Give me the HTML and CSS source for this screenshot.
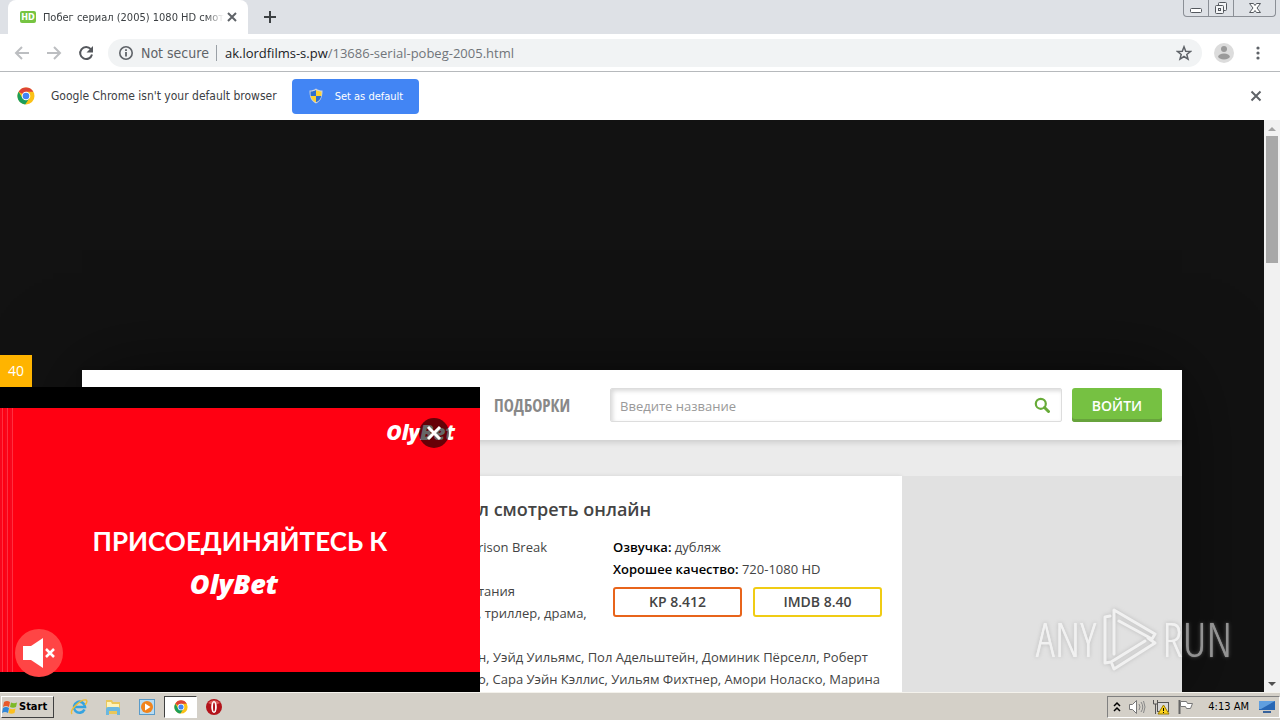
FILE: index.html
```html
<!DOCTYPE html>
<html lang="ru">
<head>
    <meta charset="UTF-8">
    <meta name="viewport" content="width=device-width, initial-scale=1">
    <title>Побег сериал (2005) 1080 HD смотреть онлайн</title>
    <link rel="stylesheet" href="styles.css">
</head>
<body>

    <!-- Tab strip -->
    <div class="tabstrip">
        <div class="tab">
            <span class="favicon">HD</span>
            <span class="tab-title">Побег сериал (2005) 1080 HD смот</span>
            <button class="icon-btn" aria-label="Close tab">
                <svg width="16" height="16" viewBox="0 0 16 16"><path d="M4 4l8 8M12 4l-8 8" stroke="#5f6368" stroke-width="2"/></svg>
            </button>
        </div>
        <button class="icon-btn new-tab" aria-label="New tab">
            <svg width="16" height="16" viewBox="0 0 16 16"><path d="M8 2v12M2 8h12" stroke="#3c4043" stroke-width="2"/></svg>
        </button>
        <div class="window-buttons">
            <button aria-label="Minimize">
                <svg width="24" height="16" viewBox="0 0 24 16"><rect x="6.500" y="8.500" width="11" height="4" rx="1" fill="#fff" stroke="#54585e"/></svg>
            </button>
            <button aria-label="Restore">
                <svg width="24" height="16" viewBox="0 0 24 16"><g fill="#f4f5f7" stroke="#54585e"><rect x="9.500" y="2.500" width="8" height="8" rx="1"/><rect x="6.500" y="5.500" width="8" height="8" rx="1"/><rect x="9.500" y="8.500" width="2" height="2"/></g></svg>
            </button>
            <button class="wide" aria-label="Close">
                <svg width="24" height="16" viewBox="0 0 24 16"><path d="M6.500 3.500h4l1.500 2 1.500-2h4L14 8l3.500 4.500h-4l-1.500-2-1.500 2h-4L10 8z" fill="#fff" stroke="#54585e"/></svg>
            </button>
        </div>
    </div>

    <!-- Toolbar -->
    <div class="toolbar">
        <button class="icon-btn" aria-label="Back">
            <svg width="16" height="16" viewBox="0 0 16 16"><path d="M15 8H2.500M8 2L2 8l6 6" fill="none" stroke="#bcbec1" stroke-width="2"/></svg>
        </button>
        <button class="icon-btn" aria-label="Forward">
            <svg width="16" height="16" viewBox="0 0 16 16"><path d="M1 8h12.500M8 2l6 6-6 6" fill="none" stroke="#bcbec1" stroke-width="2"/></svg>
        </button>
        <button class="icon-btn" aria-label="Reload">
            <svg width="16" height="16" viewBox="0 0 16 16"><path d="M12.800 4.200A6 6 0 1 0 14 9.500" fill="none" stroke="#55585d" stroke-width="2"/><path d="M15 1v6.500H8.500z" fill="#55585d"/></svg>
        </button>
        <div class="omnibox">
            <svg width="16" height="16" viewBox="0 0 16 16"><circle cx="8" cy="8" r="6.200" fill="none" stroke="#5f6368" stroke-width="1.600"/><path d="M8 7v4.500M8 4.300v1.600" stroke="#5f6368" stroke-width="1.800"/></svg>
            <span class="secure">Not secure</span>
            <span class="url"><b>ak.lordfilms-s.pw</b>/13686-serial-pobeg-2005.html</span>
            <button class="icon-btn" aria-label="Bookmark">
                <svg width="16" height="16" viewBox="0 0 16 16"><path d="M8 1.800l1.700 4.400 4.700.3-3.600 3 1.200 4.600L8 11.500l-4 2.600 1.200-4.600-3.600-3 4.700-.3z" fill="none" stroke="#5f6368" stroke-width="1.500"/></svg>
            </button>
        </div>
        <button class="icon-btn" aria-label="Profile">
            <svg width="20" height="20" viewBox="0 0 20 20"><circle cx="10" cy="10" r="10" fill="#dcdcdc"/><circle cx="10" cy="6" r="3" fill="#9a9a9a"/><ellipse cx="10" cy="13.500" rx="5.800" ry="3" fill="#9a9a9a"/></svg>
        </button>
        <button class="icon-btn" aria-label="Menu">
            <svg width="16" height="16" viewBox="0 0 16 16" fill="#5f6368"><circle cx="8" cy="3" r="1.600"/><circle cx="8" cy="8" r="1.600"/><circle cx="8" cy="13" r="1.600"/></svg>
        </button>
    </div>

    <!-- Default browser bar -->
    <div class="infobar">
        <svg width="18" height="18" viewBox="0 0 18 18"><circle cx="9" cy="9" r="8.500" fill="#fbc116"/><path d="M9 9L1.600 4.700A8.500 8.500 0 0 1 16.400 4.700H9z" fill="#dd4437"/><path d="M1.600 4.700A8.500 8.500 0 0 0 8.200 17.500L12.500 11 9 9 5.500 11z" fill="#1b9e5a"/><circle cx="9" cy="9" r="4.300" fill="#fff"/><circle cx="9" cy="9" r="3.300" fill="#4285f4"/></svg>
        <span class="infobar-text">Google Chrome isn't your default browser</span>
        <button class="default-btn">
            <svg width="16" height="16" viewBox="0 0 16 16"><path d="M8 .5C6 2 4 2.500 1.500 2.500 1.500 9 3 13 8 15.500 13 13 14.500 9 14.500 2.500 12 2.500 10 2 8 .5z" fill="#cfd4dc"/><path d="M8 2v6H2.700C2.500 6.500 2.500 5 2.600 3.600 5 3.400 6.500 3 8 2z" fill="#2f6fd0"/><path d="M8 2v6h5.300c.2-1.500.2-3 .1-4.400C11 3.400 9.500 3 8 2z" fill="#fdd232"/><path d="M8 14.200V8H2.700c.6 3 2.300 5 5.300 6.200z" fill="#fdd232"/><path d="M8 14.200V8h5.300c-.6 3-2.300 5-5.300 6.200z" fill="#2f6fd0"/></svg>
            Set as default
        </button>
        <button class="icon-btn infobar-close" aria-label="Dismiss">
            <svg width="16" height="16" viewBox="0 0 16 16"><path d="M3.500 3.500l9 9M12.500 3.500l-9 9" stroke="#5f6368" stroke-width="2"/></svg>
        </button>
    </div>

    <div class="viewport">
        <div class="page">
            <div class="site">
                <header class="header">
                    <a class="nav-link" href="#">Подборки</a>
                    <form class="search">
                        <input type="text" placeholder="Введите название" aria-label="Введите название">
                        <button type="button" class="icon-btn" aria-label="Найти">
                            <svg width="16" height="16" viewBox="0 0 16 16"><circle cx="6.800" cy="6.800" r="5" fill="none" stroke="#67ab38" stroke-width="2.200"/><path d="M10.500 10.500l4 4" stroke="#67ab38" stroke-width="3" stroke-linecap="round"/></svg>
                        </button>
                    </form>
                    <button class="login">Войти</button>
                </header>
                <div class="columns">
                    <main class="card">
                        <h1>л смотреть онлайн</h1>
                        <div class="info">
                            <ul>
                                <li>rison Break</li>
                                <li></li>
                                <li>тания</li>
                                <li>, триллер, драма,</li>
                                <li></li>
                            </ul>
                            <div>
                                <ul>
                                    <li><b>Озвучка:</b> дубляж</li>
                                    <li><b>Хорошее качество:</b> 720-1080 HD</li>
                                </ul>
                                <div class="rates">
                                    <div class="rate kp">KP 8.412</div>
                                    <div class="rate imdb">IMDB 8.40</div>
                                </div>
                            </div>
                        </div>
                        <p class="actors">н, Уэйд Уильямс, Пол Адельштейн, Доминик Пёрселл, Роберт<br>о, Сара Уэйн Кэллис, Уильям Фихтнер, Амори Ноласко, Марина</p>
                    </main>
                    <aside class="sidebar"></aside>
                </div>
            </div>

            <!-- Sticky video ad -->
            <div class="ad">
                <div class="ad-timer">40</div>
                <div class="ad-video">
                    <div class="ad-screen">
                        <div class="ad-title">ПРИСОЕДИНЯЙТЕСЬ К</div>
                        <div class="ad-brand">OlyBet</div>
                    </div>
                    <div class="ad-logo">OlyBet</div>
                    <button class="ad-close" aria-label="Close ad">
                        <svg width="30" height="30" viewBox="0 0 30 30"><circle cx="15" cy="15" r="15" fill="#000" fill-opacity=".6"/><path d="M9 9l12 12M21 9L9 21" stroke="#fff" stroke-width="3"/></svg>
                    </button>
                    <button class="ad-mute" aria-label="Unmute">
                        <svg width="48" height="48" viewBox="0 0 48 48"><circle cx="24" cy="24" r="24" fill="#ff4545"/><path d="M8 17h8l12-8v30l-12-8H8z" fill="#fff"/><path d="M31 20l8 8M39 20l-8 8" stroke="#fff" stroke-width="2.500"/></svg>
                    </button>
                </div>
            </div>

            <div class="watermark">
                <span>ANY</span>
                <svg width="58" height="66" viewBox="0 0 58 66" fill="none" stroke="#fff" stroke-width="3" stroke-linejoin="round" stroke-linecap="round"><path d="M10 10l-5 1v46l6-1 34-21"/><path d="M14 48V4l41 24-3 5-33-18"/><path d="M48 32l7 5-41 26-2-5"/></svg>
                <span>RUN</span>
            </div>
        </div>
        <div class="scrollbar">
            <svg width="16" height="16" viewBox="0 0 16 16"><path d="M4 11l4-4 4 4z" fill="#a3a3a3"/></svg>
            <div class="thumb"></div>
            <svg width="16" height="16" viewBox="0 0 16 16"><path d="M4 6l4 4 4-4z" fill="#505050"/></svg>
        </div>
    </div>

    <!-- Windows taskbar -->
    <div class="taskbar">
        <button class="start">
            <svg width="16" height="16" viewBox="0 0 16 16"><path d="M2 3q3-2 6 0L7 8Q4 6 1 8z" fill="#e8592b"/><path d="M9 3.500q3 1.500 6 0L14 8q-3 1.500-6 0z" fill="#7db928"/><path d="M1 9q3-2 6 0l-1 5q-3-2-6 0z" fill="#2f87d8"/><path d="M7.500 9.500q3 1.500 6 0l-1 4.500q-3 1.500-6 0z" fill="#fcbf1e"/></svg>
            Start
        </button>
        <div class="quick">
            <button aria-label="Internet Explorer">
                <svg width="18" height="18" viewBox="0 0 18 18"><path d="M14.500 11.500A5.500 5.500 0 1 1 15 9H5" fill="none" stroke="#35a3e0" stroke-width="2.600"/><path d="M2 16C-1 12 11 1 16 2c2 1 0 4-1 5" fill="none" stroke="#f0bd35" stroke-width="1.400"/></svg>
            </button>
            <button aria-label="Explorer">
                <svg width="18" height="18" viewBox="0 0 18 18"><path d="M2 2h6l1 2h7v12H2z" fill="#e9c75a"/><path d="M3 4h4l1 2h7v4H3z" fill="#fff3b8"/><path d="M2 17v-6q0-2 2-2h10q2 0 2 2v6h-3v-4H5v4z" fill="#6bb8e0"/></svg>
            </button>
            <button aria-label="Media Player">
                <svg width="18" height="18" viewBox="0 0 18 18"><rect x="1.500" y="1.500" width="15" height="15" fill="#b8dcf3" stroke="#5a9bc9"/><circle cx="9" cy="9" r="6" fill="#f1841d"/><path d="M7 5.500v7L12.500 9z" fill="#fff"/></svg>
            </button>
            <button class="active" aria-label="Chrome">
                <svg width="14" height="14" viewBox="0 0 18 18"><circle cx="9" cy="9" r="8.500" fill="#fbc116"/><path d="M9 9L1.600 4.700A8.500 8.500 0 0 1 16.400 4.700H9z" fill="#dd4437"/><path d="M1.600 4.700A8.500 8.500 0 0 0 8.200 17.500L12.500 11 9 9 5.500 11z" fill="#1b9e5a"/><circle cx="9" cy="9" r="4.300" fill="#fff"/><circle cx="9" cy="9" r="3.300" fill="#4285f4"/></svg>
            </button>
            <button aria-label="Opera">
                <svg width="18" height="18" viewBox="0 0 18 18"><circle cx="9" cy="9" r="8" fill="#b3131b"/><path d="M3 5a8 8 0 0 1 12 0q-6 3-12 0z" fill="#dd5b58"/><ellipse cx="9" cy="9" rx="2.800" ry="6" fill="#fff"/><ellipse cx="9" cy="9" rx="1" ry="4.500" fill="#b3131b"/></svg>
            </button>
        </div>
        <div class="tray">
            <svg width="10" height="14" viewBox="0 0 10 14"><path d="M2 6l3-3 3 3M2 11l3-3 3 3" fill="none" stroke="#000" stroke-width="1.500"/></svg>
            <svg width="18" height="16" viewBox="0 0 18 16"><path d="M1.500 5.500h3l4-4v13l-4-4h-3z" fill="#fff" stroke="#777"/><path d="M11 5q2 3 0 6M13 3q3.500 5 0 10M15.500 2q3 6 0 12" fill="none" stroke="#888"/></svg>
            <svg width="18" height="16" viewBox="0 0 18 16"><rect x="5.500" y="3.500" width="11" height="9" fill="#d8d8d8" stroke="#555"/><path d="M1.500 1v4h4V1M3.500 5v10" fill="none" stroke="#555"/><path d="M11.500 6L17 15H6z" fill="#fbd21c" stroke="#9a7b00"/><path d="M11.500 9v3M11.500 13v1" stroke="#000"/></svg>
            <svg width="18" height="16" viewBox="0 0 18 16"><path d="M3.500 1v14" stroke="#666" stroke-width="2"/><path d="M4.500 2.500h6l1 2h5l-2 5h-4l-1-2h-5z" fill="#fff" stroke="#777"/></svg>
            <span class="clock">4:13 AM</span>
            <svg width="16" height="14" viewBox="0 0 16 14"><path d="M0 1h16v9H0z" fill="#2767b5"/><path d="M0 1h16L2 9H0z" fill="#5f9fe0"/><path d="M4 12h8" stroke="#37629b" stroke-width="2"/></svg>
        </div>
    </div>

</body>
</html>
```

FILE: styles.css
```css
* {
    box-sizing: border-box;
}

body {
    margin: 0;
    height: 100vh;
    display: flex;
    flex-direction: column;
    overflow: hidden;
    font-family: "DejaVu Sans Condensed", "DejaVu Sans", sans-serif;
    font-size: 12px;
    color: #3c4043;
    background-color: #fff;
}

button {
    font-family: inherit;
    border: none;
    padding: 0;
    background: none;
    cursor: pointer;
}

svg {
    display: block;
    flex-shrink: 0;
}

ul {
    list-style: none;
    margin: 0;
    padding: 0;
}

.icon-btn {
    display: flex;
    align-items: center;
    justify-content: center;
    flex-shrink: 0;
}

/* Tab strip */
.tabstrip {
    display: flex;
    height: 34px;
    padding: 0 4px 0 8px;
    background-color: #dee1e6;
}

.tab {
    display: flex;
    align-items: center;
    width: 240px;
    padding: 0 8px 0 12px;
    background-color: #fff;
    border-radius: 8px 8px 0 0;
}

.favicon {
    width: 16px;
    height: 12px;
    margin-right: 7px;
    border-radius: 2px;
    background-color: #76c442;
    color: #fff;
    font-size: 9px;
    font-weight: bold;
    line-height: 12px;
    text-align: center;
}

.tab-title {
    flex: 1;
    white-space: nowrap;
    font-size: 11px;
    -webkit-mask-image: linear-gradient(to right, #000 90%, transparent);
    mask-image: linear-gradient(to right, #000 90%, transparent);
}

.new-tab {
    margin-left: 14px;
}

.window-buttons {
    display: flex;
    height: 17px;
    margin-left: auto;
    border: 1px solid #8b8f96;
    border-top: none;
    border-radius: 0 0 4px 4px;
}

.window-buttons button {
    width: 25px;
    border-right: 1px solid #8b8f96;
}

.window-buttons .wide {
    display: flex;
    justify-content: center;
    width: 41px;
    border-right: none;
}

/* Toolbar */
.toolbar {
    display: flex;
    align-items: center;
    gap: 16px;
    height: 38px;
    padding: 0 14px;
    border-bottom: 1px solid #b6b9bc;
}

.omnibox {
    display: flex;
    align-items: center;
    flex: 1;
    height: 28px;
    margin-left: -2px;
    margin-right: -4px;
    padding: 0 10px;
    border-radius: 14px;
    background-color: #f1f3f4;
    font-size: 14px;
}

.secure {
    margin-left: 7px;
    padding-right: 7px;
    border-right: 1px solid #9aa0a6;
    line-height: 16px;
    color: #5f6368;
}

.url {
    flex: 1;
    margin-left: 8px;
    color: #70757a;
    font-family: "Open Sans", sans-serif;
    font-size: 13px;
}

.url b {
    font-weight: normal;
    color: #202124;
}

/* Default browser bar */
.infobar {
    display: flex;
    align-items: center;
    height: 48px;
    padding: 0 16px 0 17px;
}

.infobar-text {
    margin: 0 15px 0 16px;
}

.default-btn {
    display: flex;
    align-items: center;
    gap: 11px;
    height: 35px;
    padding: 0 16px;
    border-radius: 4px;
    background-color: #4285f4;
    color: #fff;
    font-size: 11px;
}

.infobar-close {
    margin-left: auto;
}

/* Page */
.viewport {
    display: flex;
    flex: 1;
    min-height: 0;
}

.page {
    position: relative;
    flex: 1;
    overflow: hidden;
    padding-top: 250px;
    background-color: #121212;
    font-family: "Open Sans", "Noto Sans", sans-serif;
    font-size: 13px;
    color: #444;
}

.site {
    display: flex;
    flex-direction: column;
    max-width: 1100px;
    height: 100%;
    margin: 0 auto;
    background-color: #ebebeb;
    box-shadow: 0 0 80px rgba(0, 0, 0, 0.5);
}

.header {
    display: flex;
    align-items: center;
    flex-shrink: 0;
    height: 70px;
    padding: 0 20px 0 412px;
    background-color: #fff;
    box-shadow: 0 2px 6px rgba(0, 0, 0, 0.15);
}

.nav-link {
    margin-right: 40px;
    color: #888;
    font-family: "Open Sans Condensed", "Liberation Sans Narrow", sans-serif;
    font-size: 17px;
    font-weight: bold;
    text-transform: uppercase;
    text-decoration: none;
}

.search {
    display: flex;
    align-items: center;
    flex: 1;
    height: 34px;
    padding-right: 11px;
    border: 1px solid #ddd;
    border-radius: 2px;
    box-shadow: inset 2px 2px 4px rgba(0, 0, 0, 0.15);
}

.search input {
    flex: 1;
    min-width: 0;
    padding: 2px 9px 0;
    border: none;
    outline: none;
    background: none;
    font-family: inherit;
    font-size: 13px;
}

.search input::placeholder {
    color: #999;
}

.login {
    width: 90px;
    height: 34px;
    margin-left: 10px;
    border-radius: 3px;
    background-color: #76c142;
    box-shadow: inset 0 -3px 0 #67a33c;
    color: #fff;
    font-size: 14px;
    font-weight: 600;
    text-transform: uppercase;
}

.columns {
    display: flex;
    flex: 1;
    margin-top: 36px;
}

.card {
    flex: 1;
    padding: 21px 20px 0 396px;
    background-color: #fff;
    box-shadow: 0 0 4px rgba(0, 0, 0, 0.1);
    line-height: 22px;
}

.card h1 {
    margin: 0 0 15px;
    font-size: 18px;
    font-weight: 600;
    line-height: 24px;
}

.info {
    display: grid;
    grid-template-columns: 1fr 269px;
}

.card li {
    height: 22px;
}

.card b {
    font-weight: 600;
    color: #000;
}

.rates {
    display: flex;
    gap: 11px;
    margin-top: 7px;
}

.rate {
    flex: 1;
    height: 30px;
    border: 2px solid #e8641b;
    border-radius: 3px;
    font-size: 14px;
    font-weight: 600;
    line-height: 26px;
    text-align: center;
}

.rate.imdb {
    border-color: #f0cc14;
}

.actors {
    margin: 0;
    white-space: nowrap;
}

.sidebar {
    width: 280px;
    background-color: #e1e1e1;
}

/* Sticky video ad */
.ad {
    position: absolute;
    left: 0;
    bottom: 0;
    width: 480px;
}

.ad-timer {
    width: 32px;
    height: 32px;
    background-color: #ffb400;
    color: #fff;
    font-size: 14px;
    line-height: 32px;
    text-align: center;
}

.ad-video {
    position: relative;
    padding: 21px 0 20px;
    background-color: #000;
}

.ad-screen {
    display: flex;
    flex-direction: column;
    align-items: center;
    height: 264px;
    padding-top: 114px;
    background: linear-gradient(to right, transparent 14px, #ff0012 14px), repeating-linear-gradient(to right, #f8061c 0, #f8061c 2px, #ff3040 2px, #ff3040 3px, #ff0012 3px, #ff0012 5px);
    color: #fff;
}

.ad-title {
    font-family: Lato, sans-serif;
    font-size: 26px;
    font-weight: bold;
    line-height: 38px;
}

.ad-brand,
.ad-logo {
    font-family: "Open Sans", sans-serif;
    font-weight: 800;
    font-style: italic;
    color: #fff;
}

.ad-brand {
    margin-right: 12px;
    font-size: 27px;
    line-height: 48px;
}

.ad-logo {
    position: absolute;
    top: 29px;
    right: 25px;
    font-size: 21px;
    line-height: 32px;
}

.ad-close {
    position: absolute;
    top: 31px;
    right: 31px;
}

.ad-mute {
    position: absolute;
    left: 15px;
    bottom: 15px;
}

.watermark {
    position: absolute;
    right: 32px;
    bottom: 20px;
    display: flex;
    align-items: center;
    gap: 4px;
    color: #fff;
    opacity: 0.55;
    font-family: "Open Sans Condensed Light", "Roboto Condensed", sans-serif;
    font-size: 48px;
    font-weight: 300;
    line-height: 64px;
    text-shadow: 0 0 1px #fff, 0 0 4px #888;
}

.watermark svg {
    filter: drop-shadow(0 0 2px #999);
}

.scrollbar {
    display: flex;
    flex-direction: column;
    width: 16px;
    background-color: #f1f1f1;
}

.thumb {
    height: 127px;
    margin: 0 2px auto;
    background-color: #a8a8a8;
}

/* Windows taskbar */
.taskbar {
    display: flex;
    align-items: center;
    height: 28px;
    padding: 0 0 0 1px;
    border-top: 1px solid #f4f2ec;
    background-color: #d4d0c8;
    color: #000;
    font-size: 11px;
}

.start {
    display: flex;
    align-items: center;
    gap: 1px;
    width: 53px;
    height: 22px;
    border: 1px solid #fff;
    border-right-color: #404040;
    border-bottom-color: #404040;
    font-size: 11px;
    font-weight: bold;
}

.quick {
    display: flex;
    margin-left: 8px;
}

.quick button {
    display: flex;
    align-items: center;
    justify-content: center;
    width: 34px;
    height: 22px;
}

.quick .active {
    width: 33px;
    background-color: #fff;
    border: 1px solid #fff;
    border-top-color: #404040;
    border-left-color: #404040;
}

.tray {
    display: flex;
    align-items: center;
    gap: 6px;
    height: 22px;
    margin-left: auto;
    padding: 0 4px;
    border: 1px solid #fff;
    border-top-color: #808080;
    border-left-color: #808080;
}

.clock {
    margin: 0 4px 0 8px;
}
```
